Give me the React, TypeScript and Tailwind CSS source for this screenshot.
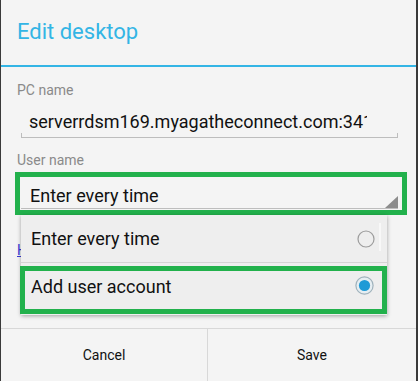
import React from "react";

function Radio({ checked }: { checked: boolean }) {
  if (!checked) {
    return (
      <svg width="18" height="18" viewBox="0 0 18 18">
        <circle cx="9" cy="9" r="8" fill="none" stroke="#9c9c9c" strokeWidth="1.2" />
      </svg>
    );
  }
  return (
    <svg width="19" height="19" viewBox="0 0 19 19">
      <circle cx="9.5" cy="9.5" r="8.6" fill="#e6eef2" stroke="#9fb2bc" strokeWidth="1.2" />
      <circle cx="9.5" cy="9.5" r="5.6" fill="#1e9ad6" />
    </svg>
  );
}

export default function App() {
  return (
    <div
      className="relative w-[418px] h-[381px] overflow-hidden bg-[#f4f4f4] border-l border-r-2 border-[#3a3a3a] flex flex-col"
      style={{ fontFamily: "Roboto, 'Noto Sans', sans-serif" }}
    >
      {/* Title */}
      <div className="h-[65px] pl-[16px] pt-[18px] text-[22px] leading-[28px] text-[#33b5e5]">
        Edit desktop
      </div>
      <div className="h-[2px] bg-[#33b5e5]" />

      {/* Content */}
      <div className="flex flex-col pl-[14px]">
        <div className="ml-[2px] mt-[13px] text-[14px] leading-[20px] text-[#8a8a8a]">PC name</div>
        <div className="ml-[6px] mt-[10px] w-[377px]">
          <div className="w-[346px] pl-[8px] h-[23px] overflow-hidden whitespace-nowrap text-[18px] leading-[24px] text-[#111]">
            serverrdsm169.myagatheconnect.com:3410
          </div>
          <div className="h-[5px] border-x border-b border-[#bdbdbd]" />
        </div>

        <div className="ml-[2px] mt-[12px] text-[14px] leading-[20px] text-[#8a8a8a]">User name</div>

        <div className="mt-[2px] w-[392px] h-[43px] border-[5px] border-[#22b14c] flex flex-col">
          <div className="flex items-end h-[31px]">
            <div className="flex-1 pl-[10px] pt-[5px] text-[18px] leading-[24px] text-[#111]">Enter every time</div>
            <svg width="13" height="12" viewBox="0 0 13 12" className="mr-[4px]">
              <polygon points="13,0 13,12 0,12" fill="#8c8c8c" />
            </svg>
          </div>
          <div className="ml-[1px] w-[377px] h-[1px] bg-[#bdbdbd]" />
        </div>

        <div className="ml-[2px] mt-[25px] text-[14px] leading-[20px] text-[#3a3ad8] underline">Hide</div>
      </div>

      {/* Buttons */}
      <div className="mt-auto h-[53px] border-t border-[#d8d8d8] flex text-[14px] text-[#111]">
        <div className="w-[207px] border-r border-[#d8d8d8] flex items-center justify-center">Cancel</div>
        <div className="flex-1 flex items-center justify-center">Save</div>
      </div>

      {/* Dropdown popup */}
      <div className="absolute left-[20px] top-[215px] w-[366px] h-[100px] bg-[#eeeeee] shadow-[0_1px_4px_rgba(0,0,0,0.35)] flex flex-col">
        <div className="relative h-[47px] flex items-center justify-between pl-[10px] pr-[12px]">
          <span className="text-[18px] leading-[24px] text-[#111]">Enter every time</span>
          <Radio checked={false} />
          <div className="absolute right-[6px] top-[8px] w-[2px] h-[28px] bg-[#f8f8f8]" />
        </div>
        <div className="h-[1px] bg-[#d4d4d4]" />
        <div className="flex-1 flex items-start justify-between pl-[10px] pr-[13px] pt-[12px]">
          <span className="text-[18px] leading-[24px] text-[#111]">Add user account</span>
          <div className="mt-[1px]">
            <Radio checked={true} />
          </div>
        </div>
      </div>

      {/* Highlight annotation */}
      <div className="absolute left-[19px] top-[266px] w-[367px] h-[48px] border-[5px] border-[#22b14c]" />
    </div>
  );
}
